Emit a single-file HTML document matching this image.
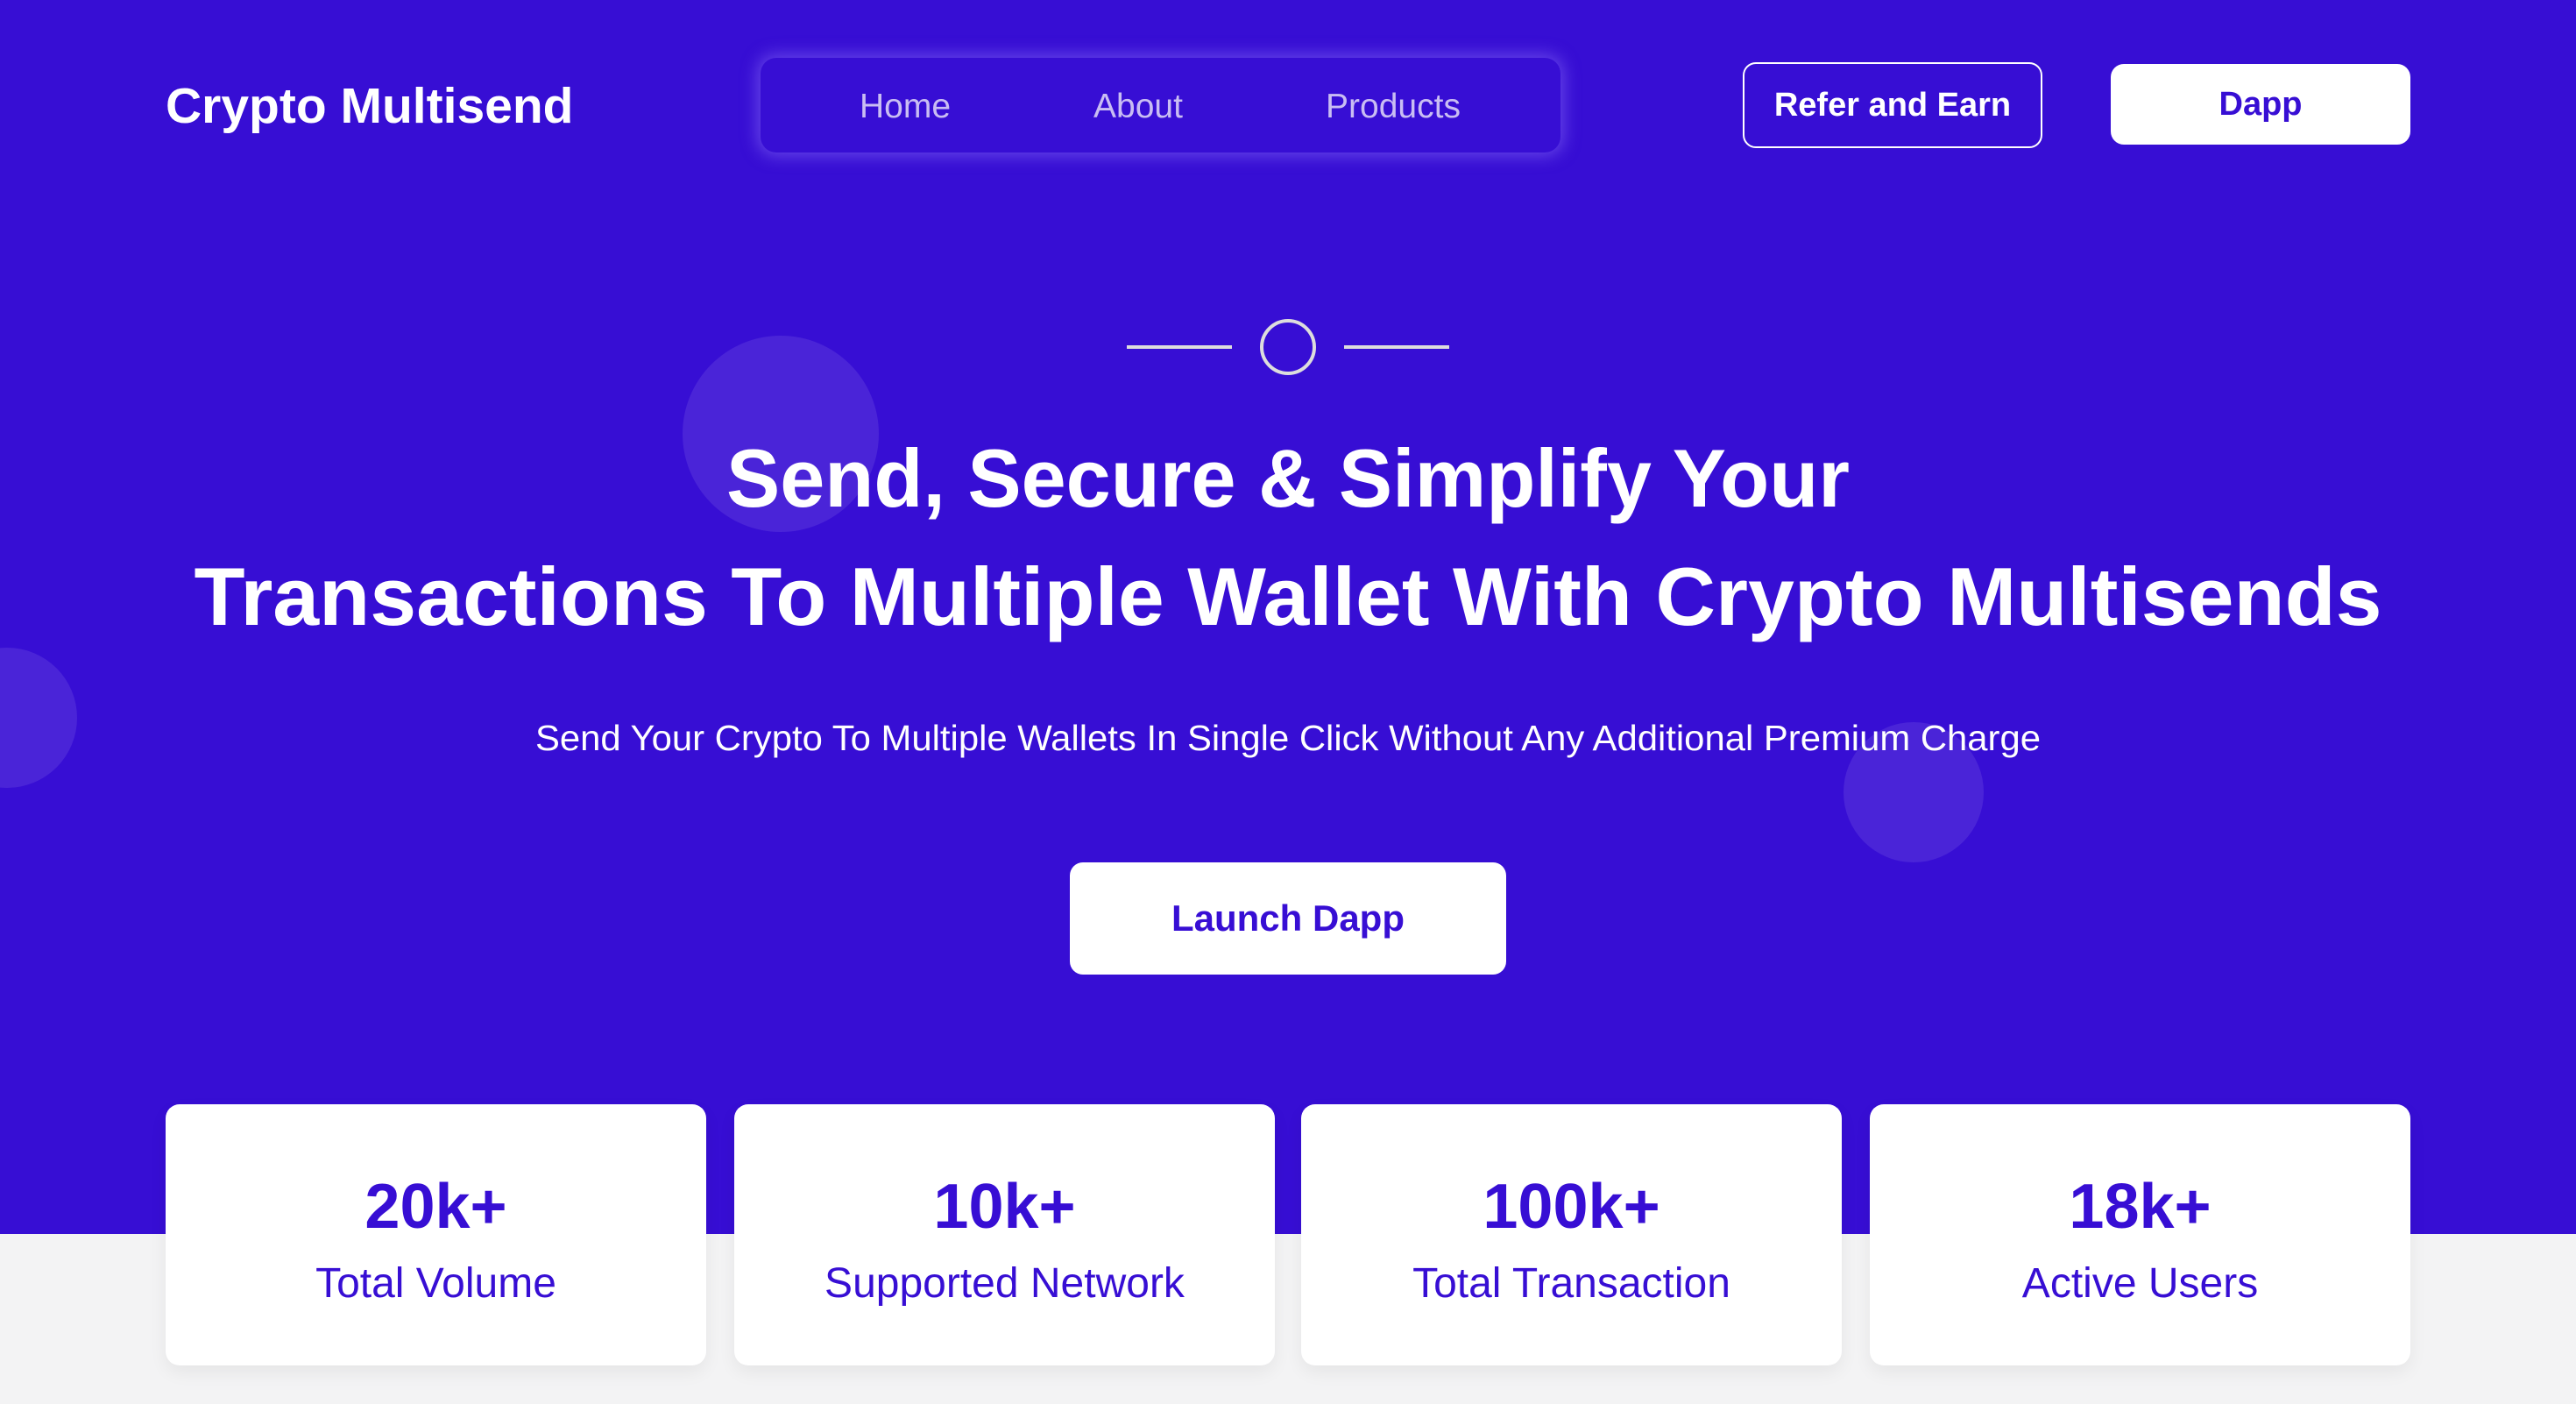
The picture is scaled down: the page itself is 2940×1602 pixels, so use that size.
<!DOCTYPE html>
<html><head><meta charset="utf-8"><style>
*{margin:0;padding:0;box-sizing:border-box}
body{width:2940px;height:1602px;overflow:hidden;background:#f3f3f4;font-family:"Liberation Sans",sans-serif;position:relative}
.hero{position:absolute;left:0;top:0;width:2940px;height:1408px;background:#370ed4;overflow:hidden}
.c{position:absolute;border-radius:50%;background:#4a24d8}
.abs{position:absolute}
.nav{left:868px;top:66px;width:913px;height:108px;border-radius:18px;box-shadow:0 0 18px 4px rgba(120,90,240,.7);background:#370ed4}
.nav span{position:absolute;top:34px;font-size:39px;color:#c9bdf3;transform:translateX(-50%)}
.btn{border-radius:15px;display:flex;align-items:center;justify-content:center;font-weight:bold}
.card{position:absolute;top:1260px;width:617px;height:298px;background:#fff;border-radius:16px;box-shadow:0 8px 20px rgba(0,0,0,.06);text-align:center;color:#370ed4}
.card .n{margin-top:77px;font-size:72px;font-weight:bold;line-height:80px}
.card .l{margin-top:18px;font-size:48px;line-height:60px}
</style></head><body>
<div class="hero">
<div class="c" style="left:779px;top:383px;width:224px;height:224px"></div>
<div class="c" style="left:-72px;top:739px;width:160px;height:160px"></div>
<div class="c" style="left:2104px;top:824px;width:160px;height:160px"></div>
<div class="abs" style="left:189px;top:88px;font-size:57px;font-weight:bold;color:#fff">Crypto Multisend</div>
<div class="abs nav"><span style="left:165px">Home</span><span style="left:431px">About</span><span style="left:722px">Products</span></div>
<div class="abs btn" style="left:1989px;top:71px;width:342px;height:98px;border:2px solid #fff;color:#fff;font-size:38px">Refer and Earn</div>
<div class="abs btn" style="left:2409px;top:73px;width:342px;height:92px;background:#fff;color:#370ed4;font-size:38px">Dapp</div>
<svg class="abs" style="left:0;top:0" width="2940" height="1408">
<line x1="1286" y1="396" x2="1406" y2="396" stroke="#ddd" stroke-width="4"/>
<line x1="1534" y1="396" x2="1654" y2="396" stroke="#ddd" stroke-width="4"/>
<circle cx="1470" cy="396" r="30" fill="none" stroke="#ddd" stroke-width="4"/>
<text x="1470" y="578" text-anchor="middle" font-family="Liberation Sans" font-weight="bold" font-size="94" fill="#fff" textLength="1282" lengthAdjust="spacingAndGlyphs">Send, Secure &amp; Simplify Your</text>
<text x="1470" y="713" text-anchor="middle" font-family="Liberation Sans" font-weight="bold" font-size="94" fill="#fff" textLength="2497" lengthAdjust="spacingAndGlyphs">Transactions To Multiple Wallet With Crypto Multisends</text>
<text x="1470" y="856" text-anchor="middle" font-family="Liberation Sans" font-size="41" fill="#fff" textLength="1718" lengthAdjust="spacingAndGlyphs">Send Your Crypto To Multiple Wallets In Single Click Without Any Additional Premium Charge</text>
</svg>
<div class="abs btn" style="left:1221px;top:984px;width:498px;height:128px;background:#fff;color:#370ed4;font-size:42px">Launch Dapp</div>
</div>
<div class="card" style="left:189px"><div class="n">20k+</div><div class="l">Total Volume</div></div>
<div class="card" style="left:838px"><div class="n">10k+</div><div class="l">Supported Network</div></div>
<div class="card" style="left:1485px"><div class="n">100k+</div><div class="l">Total Transaction</div></div>
<div class="card" style="left:2134px"><div class="n">18k+</div><div class="l">Active Users</div></div>
</body></html>
